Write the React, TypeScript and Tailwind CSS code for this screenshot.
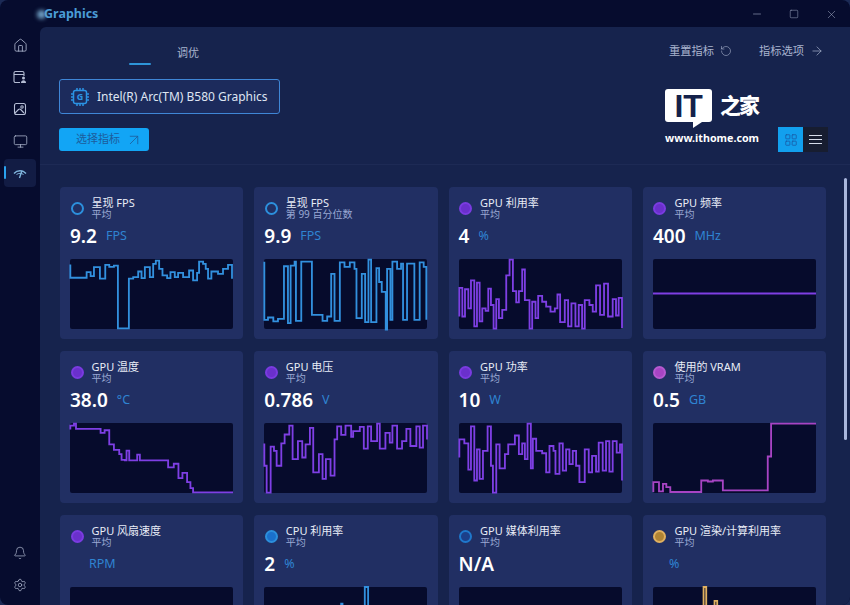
import {
  ArrowRight,
  ArrowUpRight,
  Bell,
  House,
  LayoutGrid,
  Minus,
  Monitor,
  RotateCcw,
  Settings,
  Square,
  X,
} from "lucide-react";

const FONT = '"Noto Sans", "Noto Sans CJK SC", sans-serif';

const BLUE = "#3290de";
const PURPLE = "#7e3fe4";
const PINK = "#a744c4";
const ORANGE = "#e0b060";

interface MetricI {
  title: string;
  sub: string;
  value: string;
  unit: string;
  dot: string;
  color: string;
  path: string;
  pad?: string;
}

const metrics: MetricI[] = [
  {
    title: "呈现 FPS",
    sub: "平均",
    value: "9.2",
    unit: "FPS",
    dot: "border-[#2c8fdc]",
    color: BLUE,
    path: "M1 17 V57 H50 V40 H62 V52 H72 V25 H90 V60 H106 V18 H118 V24 H132 V20 H144 V211 H177 V60 H190 V55 H205 V38 H215 V58 H225 V25 H240 V55 H250 V15 H258 V5 H268 V30 H278 V50 H292 V58 H302 V40 H315 V55 H325 V42 H340 V55 H358 V35 H370 V65 H382 V42 H388 V8 H400 V15 H408 V30 H415 V60 H425 V38 H445 V45 H460 V30 H475 V18 H487 V60",
  },
  {
    title: "呈现 FPS",
    sub: "第 99 百分位数",
    value: "9.9",
    unit: "FPS",
    dot: "border-[#2c8fdc]",
    color: BLUE,
    path: "M1 8 V185 H12 V178 H28 V190 H42 V182 H60 V22 H72 V195 H80 V20 H92 V8 H96 V188 H112 V8 H144 V170 H176 V188 H190 V175 H202 V45 H212 V188 H228 V10 H242 V24 H258 V10 H272 V30 H278 V180 H294 V45 H304 V192 H314 V2 H322 V192 H338 V28 H346 V70 H354 V100 H366 V215 H370 V30 H380 V185 H386 V8 H400 V30 H412 V14 H418 V185 H430 V14 H452 V185 H468 V10 H480 V24 H488 V185",
  },
  {
    title: "GPU 利用率",
    sub: "平均",
    value: "4",
    unit: "%",
    dot: "bg-[#6a30cc] border-[#7a3be0]",
    color: PURPLE,
    path: "M1 175 V88 H10 V175 H18 V92 H28 V150 H36 V65 H46 V205 H54 V72 H62 V190 H70 V150 H80 V158 H88 V90 H96 V140 H104 V212 H112 V122 H120 V180 H130 V155 H142 V50 H152 V2 H162 V98 H172 V132 H180 V98 H190 V32 H198 V125 H212 V212 H220 V130 H230 V180 H238 V112 H250 V130 H262 V145 H275 V160 H288 V150 H296 V108 H304 V192 H318 V125 H328 V205 H338 V135 H350 V205 H360 V140 H370 V212 H378 V125 H392 V140 H402 V160 H412 V80 H424 V170 H436 V75 H448 V175 H462 V122 H472 V172 H480 V118 H490 V210",
  },
  {
    title: "GPU 频率",
    sub: "平均",
    value: "400",
    unit: "MHz",
    dot: "bg-[#6a30cc] border-[#7a3be0]",
    color: PURPLE,
    path: "M0 105 H490",
  },
  {
    title: "GPU 温度",
    sub: "平均",
    value: "38.0",
    unit: "°C",
    dot: "bg-[#6a30cc] border-[#7a3be0]",
    color: PURPLE,
    path: "M1 20 V8 H12 V2 H18 V18 H92 V30 H104 V22 H118 V65 H132 V82 H148 V95 H155 V112 H165 V114 H170 V84 H178 V114 H202 V96 H210 V114 H295 V135 H312 V124 H326 V168 H338 V152 H352 V180 H362 V198 H370 V211 H490",
  },
  {
    title: "GPU 电压",
    sub: "平均",
    value: "0.786",
    unit: "V",
    dot: "bg-[#6a30cc] border-[#7a3be0]",
    color: PURPLE,
    path: "M1 62 V130 H8 V212 H20 V72 H30 V85 H38 V130 H52 V62 H62 V35 H76 V8 H86 V110 H102 V55 H115 V105 H125 V65 H138 V15 H148 V150 H165 V95 H176 V170 H186 V110 H200 V160 H212 V50 H220 V10 H232 V36 H245 V8 H262 V42 H268 V25 H288 V12 H300 V78 H312 V10 H322 V55 H340 V2 H348 V78 H365 V30 H378 V60 H386 V8 H400 V78 H415 V55 H428 V18 H440 V70 H458 V10 H468 V75 H478 V8 H490 V50",
  },
  {
    title: "GPU 功率",
    sub: "平均",
    value: "10",
    unit: "W",
    dot: "bg-[#6a30cc] border-[#7a3be0]",
    color: PURPLE,
    path: "M1 105 V50 H16 V62 H28 V142 H36 V10 H46 V175 H54 V80 H62 V170 H72 V85 H86 V10 H96 V130 H102 V212 H112 V65 H122 V138 H138 V95 H148 V65 H168 V38 H180 V95 H190 V62 H198 V110 H206 V2 H216 V138 H222 V48 H232 V85 H250 V92 H262 V150 H272 V70 H284 V85 H290 V155 H302 V62 H312 V145 H322 V80 H332 V125 H342 V85 H352 V130 H362 V180 H378 V80 H390 V150 H400 V100 H412 V148 H420 V60 H432 V145 H442 V55 H452 V148 H462 V55 H474 V90 H484 V65 H490 V175",
  },
  {
    title: "使用的 VRAM",
    sub: "平均",
    value: "0.5",
    unit: "GB",
    dot: "bg-[#a744c4] border-[#b65ad0]",
    color: PINK,
    path: "M1 210 V180 H18 V208 H30 V185 H40 V195 H52 V210 H145 V175 H165 V178 H180 V175 H210 V205 H345 V102 H355 V2 H490",
  },
  {
    title: "GPU 风扇速度",
    sub: "平均",
    value: "",
    unit: "RPM",
    dot: "bg-[#6a30cc] border-[#7a3be0]",
    color: PURPLE,
    path: "",
    pad: "w-[19px]",
  },
  {
    title: "CPU 利用率",
    sub: "平均",
    value: "2",
    unit: "%",
    dot: "bg-[#1a70cc] border-[#2c8fdc]",
    color: BLUE,
    path: "M0 213 H232 V51 H236 V213 H303 V0 H313 V213 H490",
  },
  {
    title: "GPU 媒体利用率",
    sub: "平均",
    value: "N/A",
    unit: "",
    dot: "bg-[#1c3f8a] border-[#1f78cc]",
    color: BLUE,
    path: "",
  },
  {
    title: "GPU 渲染/计算利用率",
    sub: "平均",
    value: "",
    unit: "%",
    dot: "bg-[#b08434] border-[#e0b060]",
    color: ORANGE,
    path: "M0 213 H152 V0 H160 V213 H185 V42 H193 V213 H490",
    pad: "w-[16px]",
  },
];

function Chart({ path, color }: { path: string; color: string }) {
  return (
    <div className="mt-[8px] h-[70px] w-[163px] rounded-[2px] bg-[#060b2c]">
      <svg viewBox="0 0 490 213" preserveAspectRatio="none" className="h-full w-full overflow-visible">
        {path && <path d={path} fill="none" stroke={color} strokeWidth="5.5" />}
      </svg>
    </div>
  );
}

function MetricCard({ data }: { data: MetricI }) {
  return (
    <article className="flex h-[152px] flex-col rounded-[4px] bg-[#212f63] px-[10px] pt-[7px]">
      <div className="flex h-[28px] items-center">
        <span className={`ml-[0.5px] h-[13px] w-[13px] shrink-0 rounded-full border-2 ${data.dot}`} />
        <div className="ml-[8px] flex flex-col">
          <span className="text-[11px] leading-[13px] text-[#e8ecf6]">{data.title}</span>
          <span className="text-[10px] leading-[11px] text-[#9aa9d4]">{data.sub}</span>
        </div>
      </div>
      <div className="flex h-[29px] items-center">
        {data.value && (
          <span className="mr-[9px] text-[19px] leading-none font-semibold text-white">{data.value}</span>
        )}
        {data.pad && <span className={data.pad} />}
        <span className="text-[12.5px] leading-none text-[#2f84d2]">{data.unit}</span>
      </div>
      <Chart path={data.path} color={data.color} />
    </article>
  );
}

function SideIcon({ children, active }: { children: React.ReactNode; active?: boolean }) {
  return (
    <div
      className={`relative flex h-[28px] w-[32px] items-center justify-center rounded-[4px] ${
        active ? "bg-[#121c44]" : ""
      }`}>
      {active && <span className="absolute top-[7px] left-0 h-[13px] w-[2px] rounded-full bg-[#2aa2ee]" />}
      {children}
    </div>
  );
}

function Sidebar() {
  return (
    <aside className="flex w-[40px] flex-col items-center justify-between pt-[4px] pb-[6px] text-[#b4bdd4]">
      <nav className="flex flex-col gap-[4px]">
        <SideIcon>
          <House size={15} strokeWidth={1.3} />
        </SideIcon>
        <SideIcon>
          <svg width="14" height="14" viewBox="0 0 14 14" fill="none" stroke="currentColor" strokeWidth="1.1">
            <path d="M7 12.5H2.5a1.5 1.5 0 0 1-1.500-1.500V3A1.500 1.500 0 0 1 2.500 1.500h7A1.500 1.500 0 0 1 11 3v3" />
            <path d="M1 4.500h10" />
            <circle cx="10.500" cy="8" r="1.500" fill="currentColor" stroke="none" />
            <path d="M8 13c0-1.800 1-2.800 2.500-2.800S13 11.200 13 13z" fill="currentColor" stroke="none" />
          </svg>
        </SideIcon>
        <SideIcon>
          <svg width="14" height="14" viewBox="0 0 14 14" fill="none" stroke="currentColor" strokeWidth="1.1">
            <rect x="1.500" y="1.500" width="11" height="11" rx="2" />
            <circle cx="9" cy="5" r="1.200" />
            <path d="M2 11l3.500-3.500c.8-.7 1.500-.7 2.200 0L11 11" />
          </svg>
        </SideIcon>
        <SideIcon>
          <Monitor size={15} strokeWidth={1.2} />
        </SideIcon>
        <SideIcon active>
          <svg width="14" height="11" viewBox="0 0 14 11" fill="none" stroke="#7fb4dc" strokeWidth="1.400">
            <path d="M1 5.500c3.200-3.600 8.800-3.600 12 0" />
            <path d="M3.500 6.500c2-1.500 5-1.500 7 0" strokeWidth="1" />
            <path d="M9 2.500L6.500 10" />
          </svg>
        </SideIcon>
      </nav>
      <div className="flex flex-col gap-[4px]">
        <SideIcon>
          <Bell size={14} strokeWidth={1.2} />
        </SideIcon>
        <SideIcon>
          <Settings size={14} strokeWidth={1.2} />
        </SideIcon>
      </div>
    </aside>
  );
}

function ChipIcon() {
  return (
    <div className="relative flex h-[20px] w-[20px] items-center justify-center">
      <svg width="20" height="20" viewBox="0 0 20 20" fill="none" stroke="#2b93e4" strokeWidth="1.500">
        <rect x="3.500" y="3.500" width="13" height="13" rx="2" />
        <path d="M7 1v2.500M10 1v2.500M13 1v2.500M7 16.500V19M10 16.500V19M13 16.500V19M1 7h2.500M1 10h2.500M1 13h2.500M16.500 7H19M16.500 10H19M16.500 13H19" />
      </svg>
      <span className="absolute text-[9px] leading-none font-bold text-[#2b93e4]">G</span>
    </div>
  );
}

function Header() {
  return (
    <header className="flex h-[138px] justify-between border-b border-[#1d2a55] pr-[22px] pl-[19px]">
      <div className="flex flex-col items-start">
        <div className="flex h-[38px] w-full items-end">
          <span className="ml-[70px] h-[2px] w-[22px] rounded-full bg-[#2e95d8]" />
          <span className="relative -top-[1px] ml-[26px] pb-[5px] text-[11px] leading-[13px] text-[#a9b4cf]">调优</span>
        </div>
        <div className="mt-[14px] flex h-[35px] w-[221px] items-center rounded-[3px] border border-[#3f86d6] bg-[#1c2b5c] pl-[10px]">
          <ChipIcon />
          <span className="ml-[7px] text-[12px] whitespace-nowrap text-[#dfe5f2]">Intel(R) Arc(TM) B580 Graphics</span>
        </div>
        <button className="mt-[14px] flex h-[23px] w-[90px] items-center rounded-[3px] bg-[#12a5f5] pl-[17px] text-[11px] text-[#1d5c9c]">
          选择指标
          <ArrowUpRight size={18} strokeWidth={1.1} className="ml-[5px]" />
        </button>
      </div>
      <div className="flex flex-col items-end">
        <div className="mt-[16px] mr-[4px] flex h-[16px] items-center gap-[27px] text-[11.25px] text-[#a9b4cf]">
          <span className="flex items-center gap-[6px]">
            重置指标
            <RotateCcw size={12} strokeWidth={1.2} />
          </span>
          <span className="flex items-center gap-[6px]">
            指标选项
            <ArrowRight size={14} strokeWidth={1.2} />
          </span>
        </div>
        <div className="mt-[30px] flex items-start">
          <div className="mr-[19px] flex flex-col items-start">
            <div className="flex items-center">
              <div className="relative flex h-[33px] w-[47px] items-center justify-center rounded-[3px] bg-white">
                <span
                  className="text-[32px] leading-none font-bold text-[#14214a]"
                  style={{ fontFamily: '"Liberation Sans", sans-serif' }}>
                  IT
                </span>
                <span className="absolute top-full left-[28px] h-0 w-0 border-t-[6px] border-r-[9px] border-t-white border-r-transparent" />
              </div>
              <span className="ml-[8px] text-[21px] leading-none font-black tracking-[-2px] text-white">之家</span>
            </div>
            <span className="mt-[10px] text-[10.7px] leading-[13px] font-bold text-white">www.ithome.com</span>
          </div>
          <div className="mt-[38px] flex h-[25px]">
            <div className="flex w-[25px] items-center justify-center bg-[#12a0ee] text-[#1a5ca8]">
              <LayoutGrid size={14} strokeWidth={1.4} />
            </div>
            <div className="flex w-[25px] flex-col items-center justify-center gap-[3px] bg-[#171d30]">
              <span className="h-[1px] w-[13px] bg-[#d6dcea]" />
              <span className="h-[1px] w-[13px] bg-[#d6dcea]" />
              <span className="h-[1px] w-[13px] bg-[#d6dcea]" />
            </div>
          </div>
        </div>
      </div>
    </header>
  );
}

export default function App() {
  return (
    <div className="h-[605px] w-[850px] bg-[#1b2a55]" style={{ fontFamily: FONT }}>
      <div className="flex h-full flex-col overflow-hidden rounded-[8px] bg-[#060c2e]">
        <div className="flex h-[27px] items-center pt-[1px]">
          <span className="ml-[37px] h-[9px] w-[9px] rounded-full bg-[#6f9fc4] blur-[2px]" />
          <span className="-ml-[2px] text-[12.5px] font-bold text-[#4a9cd6]">Graphics</span>
          <div className="ml-auto flex items-center gap-[26px] pr-[12px] text-[#a3adc6]">
            <Minus size={12} strokeWidth={1.2} />
            <Square size={10} strokeWidth={1.2} />
            <X size={13} strokeWidth={1} />
          </div>
        </div>
        <div className="flex min-h-0 flex-1">
          <Sidebar />
          <main className="relative min-w-0 flex-1 overflow-hidden rounded-tl-[6px] bg-[#16234d]">
            <Header />
            <section className="grid grid-cols-[repeat(4,183.3px)] gap-x-[11px] gap-y-[12px] pt-[22px] pl-[20px]">
              {metrics.map((m, i) => (
                <MetricCard key={i} data={m} />
              ))}
            </section>
            <span className="absolute top-[151px] right-[3px] h-[262px] w-[3px] rounded-full bg-[#a9b7dd]" />
          </main>
        </div>
      </div>
    </div>
  );
}
